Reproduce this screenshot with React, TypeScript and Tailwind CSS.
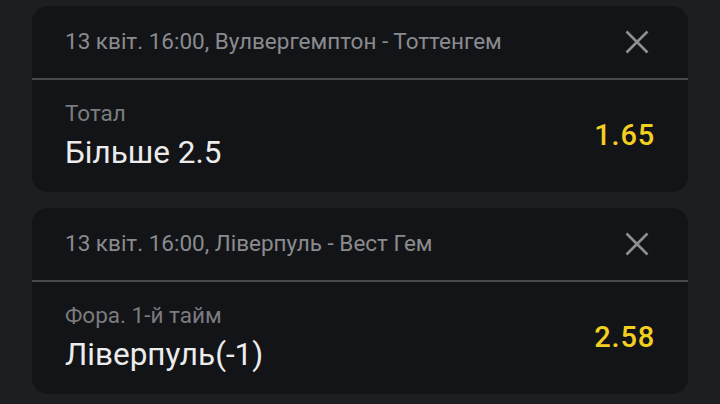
interface Bet {
  id: number;
  event: string;
  market: string;
  pick: string;
  odds: string;
}

const bets: Bet[] = [
  {
    id: 1,
    event: "13 квіт. 16:00, Вулвергемптон - Тоттенгем",
    market: "Тотал",
    pick: "Більше 2.5",
    odds: "1.65",
  },
  {
    id: 2,
    event: "13 квіт. 16:00, Ліверпуль - Вест Гем",
    market: "Фора. 1-й тайм",
    pick: "Ліверпуль(-1)",
    odds: "2.58",
  },
];

function CloseIcon() {
  return (
    <svg width="24" height="24" viewBox="0 0 24 24" className="text-[#8e8f93]">
      <path d="M1.5 1.5 L22.5 22.5 M22.5 1.5 L1.5 22.5" stroke="currentColor" strokeWidth="2.6" strokeLinecap="butt" />
    </svg>
  );
}

function BetCard({ bet }: { bet: Bet }) {
  return (
    <div className="bg-[#131417] rounded-[16px] overflow-hidden">
      <div className="h-[74px] flex items-center justify-between pl-[33px] pr-[39px] border-b-2 border-[#48494c]">
        <span className="text-[#8a8b8f] text-[22.5px]">{bet.event}</span>
        <CloseIcon />
      </div>
      <div className="h-[112px] flex items-center justify-between pl-[33px] pr-[33px]">
        <div className="flex flex-col">
          <span className="text-[#7b7c80] text-[22.5px] leading-[28px]">{bet.market}</span>
          <span className="text-[#ececec] text-[31.5px] leading-[40px] mt-[6px]">{bet.pick}</span>
        </div>
        <span className="text-[#f3cf20] text-[29px] font-medium tracking-[0.8px]">{bet.odds}</span>
      </div>
    </div>
  );
}

export default function App() {
  return (
    <div
      className="w-[720px] h-[404px] bg-[#1d1e20] px-[32px] pt-[6px] flex flex-col gap-[16px] overflow-hidden"
      style={{ fontFamily: "Roboto, 'Noto Sans', sans-serif" }}
    >
      {bets.map((bet) => (
        <BetCard key={bet.id} bet={bet} />
      ))}
    </div>
  );
}
